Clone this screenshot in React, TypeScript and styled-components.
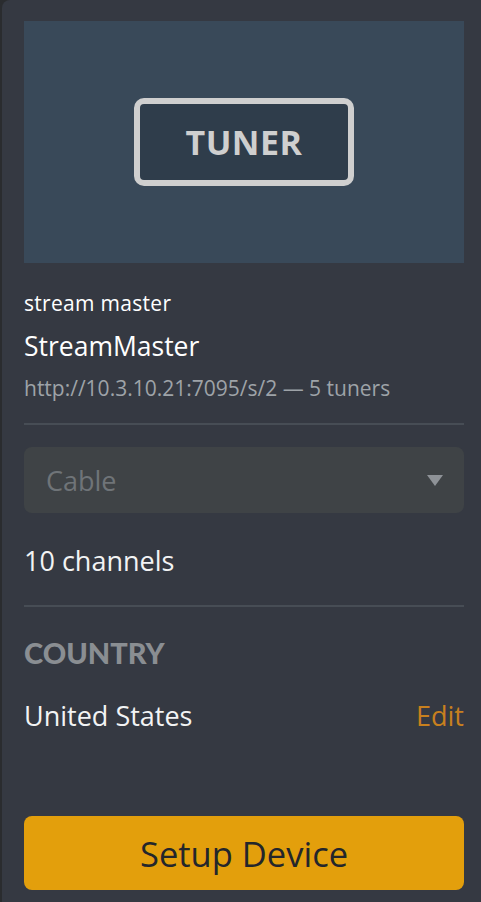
import React from 'react';
import styled, { createGlobalStyle } from 'styled-components';

const GlobalStyle = createGlobalStyle`
  html, body {
    margin: 0;
    padding: 0;
    background: #2a2c2f;
    height: 100%;
  }
  body {
    font-family: 'Open Sans', 'Noto Sans', sans-serif;
  }
`;

const Shell = styled.div`
  display: flex;
  height: 902px;
  padding-left: 2px;
  box-sizing: border-box;
`;

const Panel = styled.div`
  flex: 1;
  display: flex;
  flex-direction: column;
  background: #353942;
  border-radius: 8px 0 0 0;
  padding: 21px 17px 12px 22px;
  color: #f2f3f4;
`;

const Thumb = styled.div`
  height: 242px;
  background: #394959;
  display: flex;
  align-items: center;
  justify-content: center;
`;

const TunerBadge = styled.div`
  width: 208px;
  height: 76px;
  border: 6px solid #cfcfcf;
  border-radius: 10px;
  background: #2f3d4b;
  display: flex;
  align-items: center;
  justify-content: center;
  color: #cfcfcf;
  font-family: 'Open Sans', sans-serif;
  font-weight: 700;
  font-size: 34px;
  letter-spacing: 0.5px;
`;

const Provider = styled.div`
  margin-top: 28px;
  font-size: 21px;
  letter-spacing: 0.3px;
  line-height: 24px;
  color: #ffffff;
`;

const DeviceName = styled.div`
  margin-top: 15px;
  font-size: 26.5px;
  line-height: 32px;
  color: #ffffff;
`;

const Meta = styled.div`
  margin-top: 14px;
  font-size: 21px;
  line-height: 24px;
  color: #9ea3a8;
`;

const Divider = styled.hr<{ $gap: number }>`
  border: 0;
  height: 2px;
  background: #474d55;
  margin: ${(p) => p.$gap}px 0 0;
`;

const Select = styled.div`
  margin-top: 22px;
  height: 66px;
  border-radius: 8px;
  background: #3f4346;
  display: flex;
  align-items: center;
  justify-content: space-between;
  padding: 0 21px 0 22px;
  font-size: 27px;
  color: #6f7478;
`;

const Caret = styled.span`
  width: 0;
  height: 0;
  border-left: 8px solid transparent;
  border-right: 8px solid transparent;
  border-top: 11px solid #8e9297;
`;

const Channels = styled.div`
  margin-top: 32px;
  font-size: 27px;
  line-height: 32px;
`;

const SectionLabel = styled.div`
  margin-top: 30px;
  font-family: 'Lato', sans-serif;
  font-weight: 900;
  font-size: 29px;
  line-height: 32px;
  color: #8a8e92;
`;

const Row = styled.div`
  margin-top: 31px;
  display: flex;
  justify-content: space-between;
  align-items: center;
  font-size: 27px;
  line-height: 32px;
`;

const EditLink = styled.span`
  color: #c8801e;
`;

const Spacer = styled.div`
  flex: 1;
`;

const PrimaryButton = styled.button`
  height: 74px;
  border: 0;
  border-radius: 8px;
  background: #e39f0c;
  color: #23262b;
  font-family: 'Open Sans', 'Noto Sans', sans-serif;
  font-size: 34.5px;
  cursor: pointer;
`;

export default function App() {
  return (
    <>
      <GlobalStyle />
      <Shell>
        <Panel>
          <Thumb>
            <TunerBadge>TUNER</TunerBadge>
          </Thumb>
          <Provider>stream master</Provider>
          <DeviceName>StreamMaster</DeviceName>
          <Meta>http://10.3.10.21:7095/s/2 — 5 tuners</Meta>
          <Divider $gap={23} />
          <Select>
            Cable
            <Caret />
          </Select>
          <Channels>10 channels</Channels>
          <Divider $gap={28} />
          <SectionLabel>COUNTRY</SectionLabel>
          <Row>
            United States
            <EditLink>Edit</EditLink>
          </Row>
          <Spacer />
          <PrimaryButton>Setup Device</PrimaryButton>
        </Panel>
      </Shell>
    </>
  );
}
